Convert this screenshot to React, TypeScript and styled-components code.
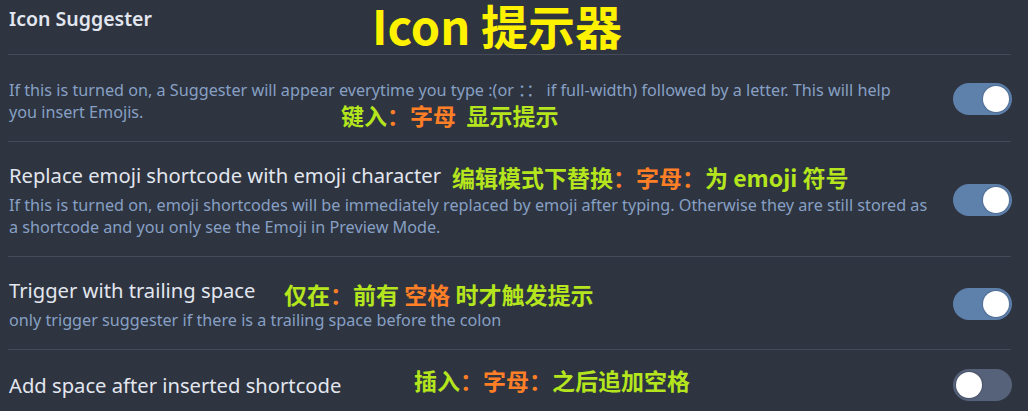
import React from "react";
import styled, { createGlobalStyle } from "styled-components";

const Global = createGlobalStyle`
  html, body { margin: 0; padding: 0; background: #2e3440; }
  body { font-family: "Noto Sans", "Noto Sans CJK SC", sans-serif; }
`;

const Page = styled.div`
  width: 1003px;
  padding: 0 17px 0 8px;
  background: #2e3440;
  min-height: 411px;
  overflow: hidden;
`;

const Header = styled.div`
  position: relative;
  height: 55px;
  border-bottom: 1px solid #434a59;
  padding: 6px 0 0 1px;
  box-sizing: border-box;
`;

const HeaderTitle = styled.div`
  font-size: 19.5px;
  line-height: 26px;
  font-weight: 600;
  color: #e2e6ee;
`;

const Setting = styled.div<{ $last?: boolean }>`
  position: relative;
  display: flex;
  align-items: center;
  gap: 24px;
  padding: 19px 0 18px 1px;
  border-bottom: ${(p) => (p.$last ? "none" : "1px solid #434a59")};
`;

const Info = styled.div`
  flex: 1;
  min-width: 0;
`;

const Name = styled.div`
  font-size: 20.2px;
  line-height: 28px;
  color: #e2e6ee;
`;

const Desc = styled.div`
  margin-top: 5px;
  font-size: 16.2px;
  line-height: 22px;
  color: #87a0c4;
  white-space: pre-line;
`;

const Toggle = styled.div<{ $on: boolean }>`
  position: relative;
  flex: none;
  width: 59px;
  height: 32px;
  border-radius: 16px;
  background: ${(p) => (p.$on ? "#5e81ac" : "#56627a")};
  margin-right: -1px;
`;

const Knob = styled.div<{ $on: boolean }>`
  position: absolute;
  top: 3px;
  left: ${(p) => (p.$on ? "30px" : "3px")};
  width: 26px;
  height: 26px;
  border-radius: 50%;
  background: #ffffff;
  box-shadow: 0 0 1px 1px rgba(0, 0, 0, 0.15);
`;

const Note = styled.div<{ $left: number; $top: number; $size?: number }>`
  position: absolute;
  left: ${(p) => p.$left}px;
  top: ${(p) => p.$top}px;
  font-family: "Noto Sans CJK SC", sans-serif;
  font-weight: 700;
  font-size: ${(p) => p.$size ?? 23}px;
  line-height: 1.15;
  white-space: pre;
  color: #b5e61d;
`;

const Orange = styled.span`
  color: #ff7f27;
`;

const Yellow = styled.span`
  color: #fff200;
`;

function Switch({ on }: { on: boolean }) {
  return (
    <Toggle $on={on}>
      <Knob $on={on} />
    </Toggle>
  );
}

export default function App() {
  return (
    <>
      <Global />
      <Page>
        <Header>
          <HeaderTitle>Icon Suggester</HeaderTitle>
          <Note $left={364} $top={-2} $size={47}>
            <Yellow>Icon 提示器</Yellow>
          </Note>
        </Header>

        <Setting>
          <Info>
            <Desc>
              {"If this is turned on, a Suggester will appear everytime you type :(or ：： if full-width) followed by a letter. This will help\nyou insert Emojis."}
            </Desc>
          </Info>
          <Switch on />
          <Note $left={333} $top={47}>
            键入<Orange>：字母</Orange>  显示提示
          </Note>
        </Setting>

        <Setting>
          <Info>
            <Name>Replace emoji shortcode with emoji character</Name>
            <Desc>
              {"If this is turned on, emoji shortcodes will be immediately replaced by emoji after typing. Otherwise they are still stored as\na shortcode and you only see the Emoji in Preview Mode."}
            </Desc>
          </Info>
          <Switch on />
          <Note $left={444} $top={22}>
            编辑模式下替换<Orange>：字母：</Orange>为 emoji 符号
          </Note>
        </Setting>

        <Setting>
          <Info>
            <Name>Trigger with trailing space</Name>
            <Desc>only trigger suggester if there is a trailing space before the colon</Desc>
          </Info>
          <Switch on />
          <Note $left={276} $top={24}>
            仅在<Orange>：</Orange>前有 <Orange>空格</Orange> 时才触发提示
          </Note>
        </Setting>

        <Setting $last>
          <Info>
            <Name>Add space after inserted shortcode</Name>
          </Info>
          <Switch on={false} />
          <Note $left={406} $top={17}>
            插入<Orange>：字母：</Orange>之后追加空格
          </Note>
        </Setting>
      </Page>
    </>
  );
}
